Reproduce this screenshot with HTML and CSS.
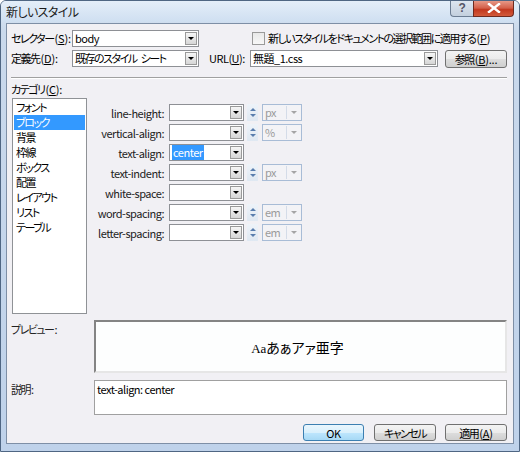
FILE: index.html
```html
<!DOCTYPE html>
<html lang="ja">
<head>
<meta charset="utf-8">
<title>新しいスタイル</title>
<link rel="stylesheet" href="styles.css">
</head>
<body>
<div class="win">
  <div class="titlebar">
    <span class="title">新しいスタイル</span>
    <div class="caps">
      <span class="cap help">?</span>
      <span class="cap close"><svg width="14" height="10" viewBox="0 0 14 10"><path d="M2 1 L12 9 M12 1 L2 9" stroke="#fff" stroke-width="2.4" stroke-linecap="square"/></svg></span>
    </div>
  </div>
  <div class="client">
    <div class="row r1">
      <span class="lbl w61 j">セレクター<span class="l">(<u>S</u>):</span></span>
      <div class="combo w127"><span class="val">body</span><span class="dd"><i class="arr"></i></span></div>
      <span class="chk"></span>
      <span class="chklbl j">新しいスタイルをドキュメントの選択範囲に適用する<span class="l">(<u>P</u>)</span></span>
    </div>
    <div class="row r2">
      <span class="lbl w61 j">定義先<span class="l">(<u>D</u>):</span></span>
      <div class="combo w127"><span class="val j ws">既存のスタイル シート</span><span class="dd"><i class="arr"></i></span></div>
      <span class="lbl urllbl">URL(<u>U</u>):</span>
      <div class="combo w188"><span class="val">無題_1.css</span><span class="dd"><i class="arr"></i></span></div>
      <span class="btn browse j">参照<span class="l">(<u>B</u>)...</span></span>
    </div>
    <div class="sep"></div>
    <div class="catlbl j">カテゴリ<span class="l">(<u>C</u>):</span></div>
    <div class="main">
      <ul class="list j">
        <li>フォント</li>
        <li class="sel">ブロック</li>
        <li>背景</li>
        <li>枠線</li>
        <li>ボックス</li>
        <li>配置</li>
        <li>レイアウト</li>
        <li>リスト</li>
        <li>テーブル</li>
      </ul>
      <div class="props">
        <div class="prow">
          <span class="plbl">line-height:</span>
          <div class="combo w75"><span class="val"></span><span class="dd"><i class="arr"></i></span></div>
          <span class="spin"><i class="up"></i><i class="dn"></i></span>
          <div class="unit"><span class="val">px</span><span class="udd"><i class="arr"></i></span></div>
        </div>
        <div class="prow">
          <span class="plbl">vertical-align:</span>
          <div class="combo w75"><span class="val"></span><span class="dd"><i class="arr"></i></span></div>
          <span class="spin"><i class="up"></i><i class="dn"></i></span>
          <div class="unit"><span class="val">%</span><span class="udd"><i class="arr"></i></span></div>
        </div>
        <div class="prow">
          <span class="plbl">text-align:</span>
          <div class="combo w75"><span class="val"><span class="hl">center</span></span><span class="dd"><i class="arr"></i></span></div>
        </div>
        <div class="prow">
          <span class="plbl">text-indent:</span>
          <div class="combo w75"><span class="val"></span><span class="dd"><i class="arr"></i></span></div>
          <span class="spin"><i class="up"></i><i class="dn"></i></span>
          <div class="unit"><span class="val">px</span><span class="udd"><i class="arr"></i></span></div>
        </div>
        <div class="prow">
          <span class="plbl">white-space:</span>
          <div class="combo w75"><span class="val"></span><span class="dd"><i class="arr"></i></span></div>
        </div>
        <div class="prow">
          <span class="plbl">word-spacing:</span>
          <div class="combo w75"><span class="val"></span><span class="dd"><i class="arr"></i></span></div>
          <span class="spin"><i class="up"></i><i class="dn"></i></span>
          <div class="unit"><span class="val">em</span><span class="udd"><i class="arr"></i></span></div>
        </div>
        <div class="prow">
          <span class="plbl">letter-spacing:</span>
          <div class="combo w75"><span class="val"></span><span class="dd"><i class="arr"></i></span></div>
          <span class="spin"><i class="up"></i><i class="dn"></i></span>
          <div class="unit"><span class="val">em</span><span class="udd"><i class="arr"></i></span></div>
        </div>
      </div>
    </div>
    <div class="prev-row">
      <span class="blbl j">プレビュー<span class="l">:</span></span>
      <div class="preview"><span class="sample"><span class="aa">Aa</span>あぁアァ亜字</span></div>
    </div>
    <div class="desc-row">
      <span class="blbl j">説明<span class="l">:</span></span>
      <div class="desc">text-align: center</div>
    </div>
    <div class="buttons">
      <span class="btn ok">OK</span>
      <span class="btn cancel j">キャンセル</span>
      <span class="btn apply j">適用<span class="l">(<u>A</u>)</span></span>
    </div>
  </div>
</div>
</body>
</html>
```
FILE: styles.css
```css
html, body {
  margin: 0;
  padding: 0;
  background: #ffffff;
}
body {
  font-family: "Noto Sans CJK JP", "Liberation Sans", sans-serif;
  font-size: 11px;
  letter-spacing: -0.5px;
  font-feature-settings: "palt";
  color: #000;
}
.j { letter-spacing: -1.5px; }
.j .l { letter-spacing: -0.2px; margin-left: 1px; }
.ws { word-spacing: 3px; }
u { text-decoration: underline; text-underline-offset: 1px; }

.win {
  width: 520px;
  height: 452px;
  box-sizing: border-box;
  border: 1px solid #4f6683;
  border-radius: 6px 6px 0 0;
  background: linear-gradient(#dde8f5 0, #cad9ec 30px, #bfd2ea 100%);
  display: flex;
  flex-direction: column;
  overflow: hidden;
}
.titlebar {
  height: 21px;
  display: flex;
  align-items: flex-start;
  justify-content: space-between;
  background: linear-gradient(#e4eef9, #cfdff1);
}
.title {
  padding: 3px 0 0 5px;
  line-height: 15px;
  font-size: 12px;
  letter-spacing: -0.6px;
  color: #1b1b1b;
}
.caps {
  display: flex;
  margin-right: 5px;
  margin-top: -1px;
}
.cap {
  height: 17px;
  box-sizing: border-box;
  border: 1px solid #6b7c92;
  border-top: none;
  display: flex;
  align-items: center;
  justify-content: center;
}
.help {
  width: 23px;
  border-radius: 0 0 0 4px;
  background: linear-gradient(#dfe7f1, #c3cfde);
  color: #556;
  font-family: "Liberation Sans", sans-serif;
  font-size: 12px;
  font-weight: bold;
  border-right: none;
}
.close {
  width: 41px;
  border-radius: 0 0 4px 0;
  border-color: #6e2a1f;
  background: linear-gradient(#e9a08f, #d4604a 50%, #c2381f 60%, #d25a3b);
}

.client {
  margin: 1px 5px 7px 5px;
  flex: 1;
  box-sizing: border-box;
  border: 1px solid #7e8fa6;
  background: #f1f0f4;
  padding: 6px 6px 0 4px;
  display: flex;
  flex-direction: column;
}

.row {
  display: flex;
  align-items: center;
  height: 17px;
}
.r2 { margin-top: 3px; }
.lbl { line-height: 17px; white-space: nowrap; }
.w61 { width: 61px; flex: none; }
.urllbl { width: 41px; margin-left: 10px; }

.combo {
  display: flex;
  box-sizing: border-box;
  height: 17px;
  border: 1px solid #8e9095;
  background: #fff;
  flex: none;
}
.w127 { width: 127px; }
.w188 { width: 188px; }
.w75 { width: 75px; }
.combo .val {
  flex: 1;
  padding-left: 2px;
  line-height: 15px;
  white-space: nowrap;
  overflow: hidden;
}
.combo .dd {
  width: 12px;
  margin: 1px 1px 1px 0;
  box-sizing: border-box;
  border: 1px solid #9a9a9a;
  background: linear-gradient(#f6f6f6, #d6d6d6);
  display: flex;
  align-items: center;
  justify-content: center;
}
.arr {
  display: block;
  width: 0;
  height: 0;
  border-left: 3px solid transparent;
  border-right: 3px solid transparent;
  border-top: 3px solid #000;
}

.chk {
  width: 13px;
  height: 13px;
  box-sizing: border-box;
  border: 1px solid #9a9a9a;
  background: linear-gradient(#e8e8e8, #f8f8f8);
  margin-left: 53px;
  flex: none;
}
.chklbl { margin-left: 3px; white-space: nowrap; line-height: 17px; }

.btn {
  display: flex;
  align-items: center;
  justify-content: center;
  box-sizing: border-box;
  height: 18px;
  border: 1px solid #707070;
  border-radius: 3px;
  background: linear-gradient(#f3f3f3 0, #ebebeb 50%, #dddddd 51%, #cfcfcf 100%);
  white-space: nowrap;
  flex: none;
}
.browse { width: 62px; margin-left: 7px; }

.sep {
  margin-top: 10px;
  height: 1px;
  background: #a0a0a0;
  border-bottom: 1px solid #ffffff;
  width: 496px;
}
.catlbl {
  margin-top: 3px;
  line-height: 14px;
  height: 14px;
}

.main {
  display: flex;
  margin-top: 2px;
  height: 216px;
}
.list {
  list-style: none;
  margin: 0 0 0 1px;
  padding: 1px 1px;
  width: 75px;
  height: 216px;
  box-sizing: border-box;
  border: 1px solid #8f9296;
  background: #fff;
}
.list li {
  height: 15px;
  line-height: 15px;
  padding-left: 2px;
  white-space: nowrap;
}
.list li.sel {
  background: #3399ff;
  color: #fff;
}

.props {
  display: flex;
  flex-direction: column;
  gap: 3px;
  padding-top: 6px;
}
.prow {
  display: flex;
  align-items: center;
  height: 17px;
}
.plbl {
  width: 77px;
  text-align: right;
  margin-right: 5px;
  white-space: nowrap;
  color: #222;
}
.hl {
  background: #3399ff;
  color: #fff;
  padding: 0 1px;
}
.spin {
  width: 11px;
  height: 17px;
  margin-left: 3px;
  display: flex;
  flex-direction: column;
  align-items: center;
  justify-content: space-around;
  box-sizing: border-box;
  background: linear-gradient(#eef3f9, #dfe8f2);
  padding: 2px 0;
}
.spin .up, .spin .dn {
  display: block;
  width: 0;
  height: 0;
  border-left: 3px solid transparent;
  border-right: 3px solid transparent;
}
.spin .up { border-bottom: 3px solid #5a7eae; }
.spin .dn { border-top: 3px solid #5a7eae; }
.unit {
  margin-left: 4px;
  width: 40px;
  height: 17px;
  box-sizing: border-box;
  border: 1px solid #a8bcd6;
  background: #f3f3f6;
  display: flex;
}
.unit .val {
  flex: 1;
  padding-left: 2px;
  line-height: 15px;
  color: #9a9a9a;
}
.unit .udd {
  width: 13px;
  margin: 1px;
  border-left: 1px solid #d4dce8;
  display: flex;
  align-items: center;
  justify-content: center;
}
.unit .arr { border-top-color: #a5a5a5; }

.prev-row, .desc-row {
  display: flex;
}
.prev-row { margin-top: 6px; }
.desc-row { margin-top: 7px; }
.blbl {
  width: 83px;
  flex: none;
  line-height: 14px;
  padding-top: 2px;
  color: #222;
}
.preview {
  width: 413px;
  height: 53px;
  box-sizing: border-box;
  border: 2px solid #e6e6e6;
  border-top-color: #848484;
  border-left-color: #848484;
  background: #fdfefe;
  display: flex;
  align-items: center;
  justify-content: center;
}
.sample {
  font-size: 14px;
  letter-spacing: 0;
  margin-left: -6px;
}
.aa {
  font-family: "Liberation Serif", serif;
  font-size: 13px;
}
.desc {
  width: 413px;
  height: 35px;
  box-sizing: border-box;
  border: 1px solid #a0a0a0;
  background: #fff;
  padding: 1px 2px;
  line-height: 14px;
}

.buttons {
  display: flex;
  justify-content: flex-end;
  margin-top: 9px;
}
.buttons .btn { height: 17px; }
.ok {
  width: 61px;
  border-color: #3c7fb1;
  background: linear-gradient(#eaf6fd 0, #d9f0fc 50%, #bee6fd 51%, #a7d9f5 100%);
}
.cancel { width: 62px; margin-left: 10px; }
.apply { width: 62px; margin-left: 9px; }
```
